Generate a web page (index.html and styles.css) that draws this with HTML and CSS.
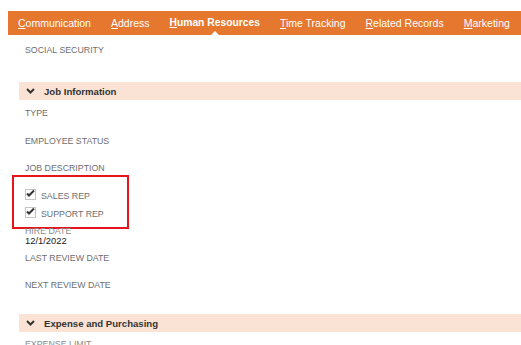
FILE: index.html
```html
<!DOCTYPE html>
<html>
<head>
<meta charset="utf-8">
<link rel="stylesheet" href="styles.css">
</head>
<body>
<div class="page">
  <nav class="tabs">
    <span class="tab"><u>C</u>ommunication</span>
    <span class="tab"><u>A</u>ddress</span>
    <span class="tab active"><u>H</u>uman Resources</span>
    <span class="tab"><u>T</u>ime Tracking</span>
    <span class="tab"><u>R</u>elated Records</span>
    <span class="tab"><u>M</u>arketing</span>
  </nav>

  <div class="content">
    <div class="field"><div class="label">SOCIAL SECURITY</div></div>

    <div class="section-head sh1">
      <svg class="chev" width="9" height="6" viewBox="0 0 9 6"><path d="M1 1 L4.5 4.5 L8 1" fill="none" stroke="#333" stroke-width="2"/></svg>
      <span>Job Information</span>
    </div>

    <div class="field first"><div class="label">TYPE</div></div>
    <div class="field"><div class="label">EMPLOYEE STATUS</div></div>
    <div class="field checks-field">
      <div class="label">JOB DESCRIPTION</div>
      <div class="checks">
        <div class="check">
          <svg class="cb" width="11" height="11" viewBox="0 0 11 11"><rect x="0.5" y="0.5" width="10" height="10" fill="#fff" stroke="#c4c4c4"/><path d="M2 4.5 L4 6.5 L9 1.5" fill="none" stroke="#333" stroke-width="2"/></svg>
          <span>SALES REP</span>
        </div>
        <div class="check">
          <svg class="cb" width="11" height="11" viewBox="0 0 11 11"><rect x="0.5" y="0.5" width="10" height="10" fill="#fff" stroke="#c4c4c4"/><path d="M2 4.5 L4 6.5 L9 1.5" fill="none" stroke="#333" stroke-width="2"/></svg>
          <span>SUPPORT REP</span>
        </div>
      </div>
      <div class="highlight"></div>
    </div>
    <div class="field hire">
      <div class="label faded">HIRE DATE</div>
      <div class="value">12/1/2022</div>
    </div>
    <div class="field"><div class="label">LAST REVIEW DATE</div></div>
    <div class="field"><div class="label">NEXT REVIEW DATE</div></div>

    <div class="section-head sh2">
      <svg class="chev" width="9" height="6" viewBox="0 0 9 6"><path d="M1 1 L4.5 4.5 L8 1" fill="none" stroke="#333" stroke-width="2"/></svg>
      <span>Expense and Purchasing</span>
    </div>
    <div class="field first"><div class="label faded">EXPENSE LIMIT</div></div>
  </div>
</div>
</body>
</html>
```

FILE: styles.css
```css
html, body {
  margin: 0;
  padding: 0;
  background: #fff;
  overflow: hidden;
}
body {
  font-family: "Liberation Sans", Arial, sans-serif;
  width: 521px;
  height: 345px;
}
.page {
  padding-top: 11px;
}
.tabs {
  margin-left: 8px;
  height: 24px;
  background: #e5772e;
  display: flex;
  align-items: center;
  gap: 20px;
  padding-left: 10px;
  white-space: nowrap;
  overflow: hidden;
}
.tab {
  color: #fff;
  font-size: 10.5px;
  line-height: 24px;
  position: relative;
}
.tab u {
  text-decoration-thickness: 1px;
  text-underline-offset: 1px;
}
.tab.active {
  font-weight: bold;
  font-size: 10.3px;
}
.tab.active::after {
  content: "";
  position: absolute;
  left: 50%;
  bottom: 0;
  margin-left: -4px;
  border-left: 4px solid transparent;
  border-right: 4px solid transparent;
  border-bottom: 4px solid #fff;
}
.content {
  padding-left: 19px;
  padding-top: 10px;
}
.field {
  padding-left: 6px;
  height: 27px;
  position: relative;
}
.label {
  font-size: 8.8px;
  line-height: 10px;
  color: #6e6e6e;
}
.label.faded {
  color: #8a8a8a;
}
.section-head {
  height: 18px;
  background: #fae3d4;
  display: flex;
  align-items: center;
  gap: 9px;
  padding-left: 7px;
  font-weight: bold;
  font-size: 9.6px;
  color: #333;
}
.chev {
  display: block;
}
.sh1 { margin-top: 10px; margin-bottom: 8px; }
.sh2 { margin-top: 7px; margin-bottom: 7px; }
.field.first { height: 28px; }
.checks-field {
  height: 63px;
}
.checks {
  margin-top: 12px;
  display: flex;
  flex-direction: column;
}
.check {
  display: flex;
  align-items: center;
  gap: 5px;
  height: 18px;
}
.check span {
  font-size: 8.8px;
  color: #6e6e6e;
  line-height: 10px;
  margin-top: 3px;
}
.cb { display: block; }
.highlight {
  position: absolute;
  left: -7px;
  top: 12px;
  width: 113px;
  height: 50px;
  border: 2px solid #e8141b;
  pointer-events: none;
}
.field.hire { height: 27px; }
.value {
  font-size: 9.4px;
  color: #222;
  line-height: 10px;
}
```
